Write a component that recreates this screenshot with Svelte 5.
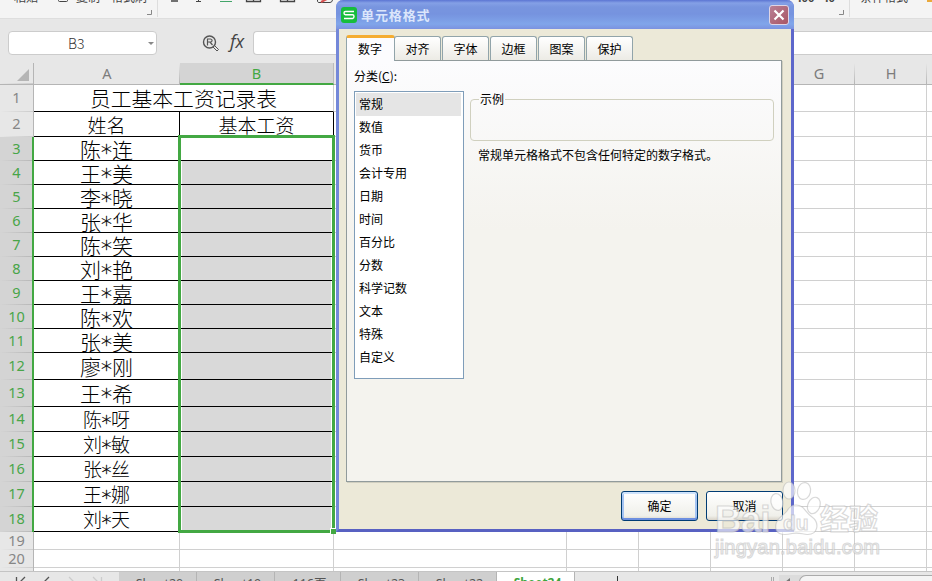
<script lang="ts">
	type Row = { n: number; h: number; name?: string; last?: string; small?: boolean };

	const rows: Array<Row> = [
		{ n: 3, h: 24, name: "陈", last: "连" },
		{ n: 4, h: 24, name: "王", last: "美" },
		{ n: 5, h: 24, name: "李", last: "晓" },
		{ n: 6, h: 24, name: "张", last: "华" },
		{ n: 7, h: 24, name: "陈", last: "笑" },
		{ n: 8, h: 24, name: "刘", last: "艳" },
		{ n: 9, h: 24, name: "王", last: "嘉" },
		{ n: 10, h: 24, name: "陈", last: "欢" },
		{ n: 11, h: 24, name: "张", last: "美" },
		{ n: 12, h: 27, name: "廖", last: "刚" },
		{ n: 13, h: 27, name: "王", last: "希" },
		{ n: 14, h: 25, name: "陈", last: "呀", small: true },
		{ n: 15, h: 25, name: "刘", last: "敏", small: true },
		{ n: 16, h: 25, name: "张", last: "丝", small: true },
		{ n: 17, h: 25, name: "王", last: "娜", small: true },
		{ n: 18, h: 25, name: "刘", last: "天", small: true },
	];
	const restCols = ["C", "D", "E", "F", "G", "H", "I"];
	const sheets = ["Sheet20", "Sheet19", "116页", "Sheet23", "Sheet22", "Sheet24"];
	const dialogTabs = ["数字", "对齐", "字体", "边框", "图案", "保护"];
	const categories = [
		"常规", "数值", "货币", "会计专用", "日期", "时间",
		"百分比", "分数", "科学记数", "文本", "特殊", "自定义",
	];

	let activeSheet = "Sheet24";
	let activeTab = "数字";
	let category = "常规";
</script>

{#snippet rest()}
	{#each restCols as c}
		<div class="cell" class:wide={c === "C"}></div>
	{/each}
{/snippet}

<div class="app">
	<div class="ribbon">
		<div class="group clip">
			<span>粘贴</span>
			<svg class="copy" width="12" height="12" viewBox="0 0 12 12">
				<rect x="1.5" y="0.5" width="9" height="11" rx="1" fill="none" stroke="#444" />
			</svg>
			<span>复制</span>
			<span class="brush">格式刷</span>
			<svg class="corner" width="5" height="5"><path d="M4.5 0V4.5H0" fill="none" stroke="#888" /></svg>
		</div>
		<div class="group font">
			<svg width="165" height="12" viewBox="0 0 165 12" fill="none" stroke="#444">
				<path d="M1 1H8" stroke-width="1.500" />
				<path d="M26 1.500H31M28.500 0V2" />
				<path d="M50 1.5H62" stroke="#43a56a" />
				<path d="M76.500 0V1.500H90.500V0M83.500 0V1.500" stroke-width="1.300" />
				<path d="M110.500 0V1.500H124.500V0M117.500 0V1.500" stroke-width="1.300" />
				<path d="M147.500 0V1.500Q148 2.500 149 2.500H160Q162 2.500 162.500 0" />
				<path d="M151 2L157 -1" stroke="#d65050" stroke-width="2" />
			</svg>
		</div>
		<div class="group number">
			<span>.00</span>
			<span>.0</span>
			<svg class="corner" width="5" height="5"><path d="M4.5 0V4.5H0" fill="none" stroke="#888" /></svg>
		</div>
		<div class="group cond"><span>条件格式</span><i></i></div>
	</div>

	<div class="formula-bar">
		<div class="name-box"><span>B3</span><i></i></div>
		<svg class="lens" width="18" height="18" viewBox="0 0 18 18" fill="none" stroke="#555">
			<circle cx="7.500" cy="7" r="6" stroke-width="1.4" />
			<path d="M5.500 10.500V4H8.500Q10.100 4.200 10.100 5.500Q10 7 8.500 7H5.500M8 7L10.500 10" stroke-width="1.2" />
			<path d="M11 12L15 16L16.500 14.500L12.500 10.500" />
		</svg>
		<span class="fx">fx</span>
		<div class="input"></div>
	</div>

	<div class="sheet">
		<div class="row cols">
			<div class="rowno"><svg width="12" height="12"><path d="M12 0V12H0Z" fill="#b5b5b5" /></svg></div>
			<div class="col a">A</div>
			<div class="col b">B</div>
			{#each restCols as c}
				<div class="col" class:wide={c === "C"}>{c}</div>
			{/each}
		</div>
		<div class="row r1">
			<div class="rowno">1</div>
			<div class="cell title">员工基本工资记录表</div>
			{@render rest()}
		</div>
		<div class="row r2">
			<div class="rowno">2</div>
			<div class="cell a black">姓名</div>
			<div class="cell b black">基本工资</div>
			{@render rest()}
		</div>
		{#each rows as row}
			<div class="row" style="height: {row.h}px">
				<div class="rowno picked" class:tall={row.h > 24}>{row.n}</div>
				<div class="cell a black" class:small={row.small} class:tall={row.h > 24}>
					{row.name}<span class="star">*</span>{row.last}
				</div>
				<div class="cell b black" class:shade={row.n > 3}></div>
				{@render rest()}
			</div>
		{/each}
		{#each [19, 20, 21] as n}
			<div class="row r19">
				<div class="rowno">{n < 21 ? n : ""}</div>
				<div class="cell a"></div>
				<div class="cell b"></div>
				{@render rest()}
			</div>
		{/each}
		<div class="selection"><i></i></div>
	</div>

	<div class="sheet-bar">
		<svg class="nav" width="119" height="10" viewBox="0 0 119 10" fill="none" stroke="#555" stroke-width="1.300">
			<path d="M16.500 5V15M25 5L18 12M49 5L42 12" />
			<path d="M69 5L76 12M93 5L100 12M101.500 5V15" stroke="#ccc" />
		</svg>
		{#each sheets as s}
			<button
				class="sheet-tab"
				class:short={s.length < 5}
				class:on={s === activeSheet}
				on:click={() => (activeSheet = s)}>{s}</button
			>
		{/each}
		<i class="plus"></i>
		<i class="grip"></i>
		<div class="scroll"><i class="left"></i><div class="thumb"></div></div>
	</div>

	<div class="dialog">
		<header>
			<svg width="16" height="16" viewBox="0 0 16 16">
				<rect width="16" height="16" rx="3" fill="#17bd3c" />
				<path d="M13 4.500H4.500Q3 4.500 3 6T4.500 7.800H11.500Q13 7.800 13 9.500T11.500 11.500H3" fill="none" stroke="#fff" stroke-width="1.400" />
			</svg>
			<h2>单元格格式</h2>
			<button class="close" aria-label="关闭">
				<svg width="12" height="12"><path d="M1.500 1.500L10.500 10.500M10.500 1.500L1.500 10.500" stroke="#fff" stroke-width="2.200" /></svg>
			</button>
		</header>
		<nav>
			{#each dialogTabs as t}
				<button class:on={t === activeTab} on:click={() => (activeTab = t)}>{t}</button>
			{/each}
		</nav>
		<div class="panel">
			<p class="label">分类(<u>C</u>):</p>
			<div class="panel-body">
				<ul>
					{#each categories as c}
						<li class:on={c === category}>{c}</li>
					{/each}
				</ul>
				<div class="preview">
					<fieldset><legend>示例</legend></fieldset>
					<p>常规单元格格式不包含任何特定的数字格式。</p>
				</div>
			</div>
		</div>
		<footer>
			<button class="default">确定</button>
			<button>取消</button>
		</footer>
	</div>

	<svg class="watermark" width="172" height="84" viewBox="0 0 172 84">
		<g fill="#fff" fill-opacity="0.65" stroke="#b4b4b4" stroke-opacity="0.5" stroke-width="1.200">
			<text x="2" y="51" class="bai">Bai</text>
			<ellipse cx="64" cy="21" rx="6" ry="8.500" transform="rotate(-12 64 21)" />
			<ellipse cx="76" cy="9.500" rx="6" ry="8.500" />
			<ellipse cx="91" cy="10" rx="6.500" ry="8.500" transform="rotate(12 91 10)" />
			<ellipse cx="101" cy="24.500" rx="6" ry="8.500" transform="rotate(22 101 24)" />
			<path d="M83 24C91 24 92 31 99 36C107 42 105 54 94 53.500C89 53 85 51 79 52.500C69 55 61 53 63 43C64 37 70 35 74 30Q77 24 83 24Z" />
			<text x="70" y="49" class="du">du</text>
			<text x="107" y="49" class="jy">经验</text>
			<text x="2" y="73" class="url" textLength="165">jingyan.baidu.com</text>
		</g>
	</svg>
</div>

<style>
	:global(body) {
		margin: 0;
		overflow: hidden;
	}
	.app {
		position: relative;
		width: 932px;
		height: 581px;
		overflow: hidden;
		display: flex;
		flex-direction: column;
		background: #e7e7e7;
		font-family: "Noto Sans", "Noto Sans CJK SC", sans-serif;
	}
	.app * {
		box-sizing: border-box;
	}
	button {
		font: inherit;
		padding: 0;
		border: 0;
	}
	p, ul, h2 {
		margin: 0;
		padding: 0;
	}

	/* ribbon: only its lower edge is in view */
	.ribbon {
		height: 19px;
		flex: none;
		display: flex;
		background: #f4f4f4;
		border-bottom: 1px solid #dedede;
		overflow: hidden;
		font: 12px/16px "Noto Sans CJK SC", sans-serif;
		color: #444;
	}
	.group {
		display: flex;
		height: 17px;
		flex: none;
	}
	.group span {
		margin-top: -11px;
		white-space: nowrap;
	}
	.clip {
		width: 158px;
		padding-left: 14px;
		border-right: 1px solid #ddd;
	}
	.copy {
		margin: -10px 7px 0 19px;
	}
	.brush {
		margin-left: 11px;
	}
	.corner {
		margin: 10px 0 0;
	}
	.font {
		padding-left: 12px;
		width: 640px;
	}
	.number {
		width: 52px;
		border-right: 1px solid #ddd;
	}
	.number span {
		width: 27px;
		flex: none;
		font-size: 11px;
		font-weight: bold;
	}
	.number span + span {
		width: 14px;
	}
	.cond {
		padding-left: 10px;
	}
	.cond i {
		width: 8px;
		height: 2px;
		margin-left: 19px;
		background: #e9a93c;
	}

	.formula-bar {
		height: 44px;
		flex: none;
		display: flex;
		align-items: flex-start;
		padding: 12px 0 0 8px;
	}
	.name-box {
		width: 149px;
		height: 24px;
		border: 1px solid #ccc;
		border-radius: 4px;
		background: #fff;
		display: flex;
		align-items: center;
		padding: 0 2px 0 59px;
		font: 14px "Noto Sans CJK SC", sans-serif;
		font-weight: 300;
		color: #333;
		justify-content: space-between;
	}
	.name-box i {
		border: 3px solid transparent;
		border-top: 3px solid #888;
		border-bottom: 0;
	}
	.lens {
		margin: 4px 9px 0 45px;
	}
	.fx {
		width: 24px;
		padding-left: 1px;
		font: italic 18px/21px "Open Sans", sans-serif;
		color: #444;
	}
	.input {
		flex: 1;
		height: 24px;
		border: 1px solid #ccc;
		border-right: 0;
		border-radius: 4px 0 0 4px;
		background: #fff;
	}

	.sheet {
		position: relative;
		height: 508px;
		flex: none;
		overflow: hidden;
		background: #fff;
	}
	.row {
		display: flex;
		width: 1100px;
	}
	.cols {
		height: 22px;
	}
	.cols .rowno {
		border-bottom: 1px solid #b5b5b5;
		align-items: flex-start;
		justify-content: flex-end;
		padding: 6px 4px 0 0;
	}
	.r1 {
		height: 27px;
	}
	.r2 {
		height: 25px;
	}
	.r19 {
		height: 18px;
	}
	.rowno {
		width: 34px;
		flex: none;
		border-right: 1px solid #b5b5b5;
		background: linear-gradient(90deg, #e7e7e7, #ccc) bottom / 100% 1px no-repeat #e7e7e7;
		display: flex;
		align-items: center;
		justify-content: center;
		padding-bottom: 2px;
		font-size: 14.5px;
		line-height: 16px;
		color: #868686;
		overflow: hidden;
	}
	.r1 .rowno,
	.r2 .rowno,
	.rowno.tall {
		padding-bottom: 4px;
	}
	.rowno.picked {
		border-right: 2px solid #43a843;
		background: linear-gradient(90deg, #d4d4d4, #b8b8b8) bottom / 100% 1px no-repeat #d4d4d4;
		color: #48a548;
		padding-left: 1px;
	}
	.col {
		width: 72px;
		flex: none;
		text-align: center;
		background: linear-gradient(#e7e7e7, #b5b5b5) right / 1px 100% no-repeat #e7e7e7;
		border-bottom: 1px solid #b5b5b5;
		font-size: 14.5px;
		line-height: 20px;
		color: #7c7c7c;
	}
	.col.b {
		background: #d4d4d4;
		border-bottom: 2px solid #43a843;
		border-right: 1px solid #bbb;
		color: #43a843;
	}
	.cell {
		width: 72px;
		flex: none;
		border-right: 1px solid #d0d0d0;
		border-bottom: 1px solid #d0d0d0;
		display: flex;
		align-items: center;
		justify-content: center;
		font: 300 19px/20px "Noto Sans CJK SC", sans-serif;
		color: #000;
	}
	.a {
		width: 146px;
	}
	.b {
		width: 154px;
	}
	.wide {
		width: 233px;
	}
	.title {
		width: 300px;
		border-bottom-color: #000;
		font-size: 20.8px;
	}
	.black {
		border-color: #000;
		font-size: 21px;
		padding-top: 1px;
	}
	.black.tall {
		padding-top: 0;
		padding-bottom: 1px;
	}
	.r2 .black,
	.small {
		font-size: 19px;
	}
	.shade {
		background: #d9d9d9;
		box-shadow: inset 2px 0 #fff, inset -2px 0 #fff;
	}
	.star {
		width: 11px;
		display: flex;
		justify-content: center;
		font-family: "DejaVu Sans", sans-serif;
		font-size: 22px;
		-webkit-text-stroke: 0.3px #000;
		position: relative;
		top: 4px;
	}
	.small .star {
		width: 9px;
		font-size: 20px;
		top: 3px;
	}
	.selection {
		position: absolute;
		left: 178px;
		top: 72px;
		width: 157px;
		height: 398px;
		border: 3px solid #43a843;
	}
	.selection i {
		position: absolute;
		right: -4px;
		bottom: -4px;
		width: 6px;
		height: 6px;
		background: #43a843;
		border: 1px solid #fff;
		border-width: 1px 0 0 1px;
	}

	.sheet-bar {
		flex: 1;
		display: flex;
		height: 10px;
		overflow: hidden;
		border-top: 1px solid #c4c4c4;
		background: #e7e7e7;
	}
	.nav {
		flex: none;
	}
	.sheet-tab {
		width: 78px;
		height: 24px;
		flex: none;
		background: #cfcfcf;
		border-right: 1px solid #b4b4b4;
		font-size: 12.5px;
		line-height: 22px;
		padding: 0 0 1px 4px;
		color: #555;
	}
	.sheet-tab.short {
		width: 66px;
	}
	.sheet-tab.on {
		margin-top: -1px;
		background: #fff;
		color: #3da53d;
		font-size: 12px;
		font-weight: bold;
	}
	.plus {
		width: 1px;
		height: 10px;
		margin: 4px 153px 0 42px;
		background: #333;
	}
	.grip {
		width: 3px;
		height: 6px;
		margin-top: 5px;
		border: 1px solid #aaa;
		border-width: 0 1px;
	}
	.scroll {
		flex: 1;
		display: flex;
		margin: 3px 0 0 5px;
		background: #dcdcdc;
	}
	.left {
		margin: 3px 9px 0 6px;
		border: 4px solid transparent;
		border-right: 5px solid #777;
		border-left: 0;
		height: 0;
	}
	.thumb {
		flex: 1;
		height: 16px;
		border: 1px solid #aaa;
		border-right: 0;
		border-radius: 7px 0 0 7px;
		background: #f4f4f4;
	}

	.dialog {
		position: absolute;
		left: 336px;
		top: 0;
		width: 458px;
		height: 532px;
		display: flex;
		flex-direction: column;
		border: 3px solid #7488d9;
		border-top: 0;
		border-right-color: #5d67cb;
		border-bottom-color: #5861c2;
		border-radius: 7px 7px 0 0;
		background: #ece9d8;
		font: 12px/16px "Noto Sans CJK SC", sans-serif;
		color: #000;
	}
	.dialog header {
		height: 29px;
		flex: none;
		margin: 0 -3px;
		padding: 1px 5px 0;
		display: flex;
		align-items: center;
		border-radius: 7px 7px 0 0;
		background: linear-gradient(#5c75d3 0, #84a0e6 3px, #7895df 7px, #7693df 14px, #80a5ea 24px, #7b92e0 29px);
	}
	h2 {
		flex: 1;
		margin-left: 4px;
		font: bold 13px/16px "Noto Sans CJK SC", sans-serif;
		letter-spacing: 0.9px;
		color: #dce6fb;
	}
	.close {
		width: 20px;
		height: 20px;
		display: flex;
		align-items: center;
		justify-content: center;
		border: 1px solid #dfd5e5;
		border-radius: 3px;
		background: linear-gradient(135deg, #b98096, #a95664);
	}
	nav {
		display: flex;
		align-items: flex-end;
		height: 31px;
		flex: none;
		padding-left: 7px;
		gap: 1px;
	}
	nav button {
		width: 47px;
		height: 24px;
		border: 1px solid #91a4aa;
		border-bottom: 0;
		border-radius: 3px 3px 0 0;
		background: linear-gradient(#fff, #ecebe5);
	}
	nav button.on {
		width: 49px;
		height: 26px;
		margin: 0 -2px -1px 0;
		padding: 0 1px 2px 0;
		border-top: 3px solid #f5ad31;
		background: #fcfcfe;
		z-index: 1;
	}
	.panel {
		width: 436px;
		height: 422px;
		flex: none;
		margin-left: 7px;
		padding: 7px;
		border: 1px solid #919b9c;
		box-shadow: 1px 1px 0 #d0cebf;
		background: linear-gradient(#fcfcfe, #f4f3ee 40%);
	}
	.label {
		line-height: 15px;
		margin-bottom: 8px;
	}
	.panel-body {
		display: flex;
		gap: 6px;
	}
	ul {
		width: 110px;
		height: 288px;
		border: 1px solid #7f9db9;
		padding: 1px;
		background: #fff;
		list-style: none;
	}
	li {
		height: 23px;
		padding-left: 3px;
		line-height: 21px;
	}
	li.on {
		background: #e5e5e5;
		margin-right: 1px;
	}
	.preview {
		width: 304px;
	}
	fieldset {
		height: 50px;
		margin: 0;
		padding: 0 8px;
		border: 1px solid #d0d0bf;
		border-radius: 4px;
	}
	legend {
		padding: 0 1px;
		line-height: 16px;
	}
	.preview p {
		margin: 6px 0 0 8px;
		white-space: nowrap;
	}
	.dialog footer {
		display: flex;
		gap: 8px;
		justify-content: flex-end;
		padding: 9px 8px 0 0;
	}
	.dialog footer button {
		width: 77px;
		height: 30px;
		padding-bottom: 1px;
		border: 1px solid #003c74;
		border-radius: 3px;
		background: linear-gradient(#fff, #f0f0ea 85%, #d8d3c8);
	}
	.dialog footer .default {
		box-shadow: inset 0 -2px #6d8fdf, inset 0 2px #cee3fc, inset 2px 0 #a5c4f2, inset -2px 0 #a5c4f2;
	}

	.watermark {
		position: absolute;
		left: 713px;
		top: 481px;
		font-family: "Liberation Sans", "Noto Sans CJK SC", sans-serif;
	}
	.bai {
		font-size: 37px;
		font-weight: bold;
		letter-spacing: -1px;
	}
	.du {
		font-size: 21px;
		font-weight: bold;
	}
	.jy {
		font-size: 29px;
		font-weight: bold;
	}
	.url {
		font-size: 20px;
	}
</style>
